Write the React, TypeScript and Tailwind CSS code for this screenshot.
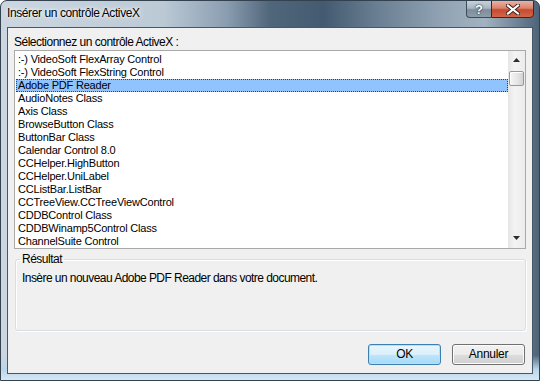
import React from "react";

const items = [
  ":-) VideoSoft FlexArray Control",
  ":-) VideoSoft FlexString Control",
  "Adobe PDF Reader",
  "AudioNotes Class",
  "Axis Class",
  "BrowseButton Class",
  "ButtonBar Class",
  "Calendar Control 8.0",
  "CCHelper.HighButton",
  "CCHelper.UniLabel",
  "CCListBar.ListBar",
  "CCTreeView.CCTreeViewControl",
  "CDDBControl Class",
  "CDDBWinamp5Control Class",
  "ChannelSuite Control",
];

const uiFont = { fontFamily: '"Liberation Sans", Arial, sans-serif' };

function TitleButtons() {
  return (
    <div className="ml-auto -mt-px flex self-start">
      <div className="flex h-[18px] w-[25px] items-center justify-center rounded-bl-[4px] border border-r-0 border-[#3d4a57] bg-[linear-gradient(to_bottom,#c6d1da_0%,#a9b6c2_45%,#7d8d9c_55%,#8d9dab_100%)]">
        <span className="text-[13px] font-bold leading-none text-white [text-shadow:0_0_2px_#1f2a35,0_0_1px_#1f2a35]">?</span>
      </div>
      <div className="flex h-[18px] w-[43px] items-center justify-center rounded-br-[4px] border border-[#4a2218] bg-[linear-gradient(to_bottom,#e9b3a4_0%,#d9826c_45%,#c64a30_55%,#d2664a_100%)]">
        <svg width="14" height="11" viewBox="0 0 14 11">
          <path d="M2 1.5 L12 9.5 M12 1.5 L2 9.5" stroke="#3b1a12" strokeWidth="4" strokeLinecap="square" />
          <path d="M2 1.5 L12 9.5 M12 1.5 L2 9.5" stroke="#ffffff" strokeWidth="2.2" strokeLinecap="square" />
        </svg>
      </div>
    </div>
  );
}

function ScrollBar() {
  return (
    <div className="flex w-[17px] flex-col bg-[linear-gradient(to_right,#e6e6e6,#f3f3f3_40%,#ececec)]">
      <div className="flex h-[17px] items-center justify-center pt-[1px]">
        <svg width="7" height="4" viewBox="0 0 7 4">
          <path d="M3.5 0 L7 4 L0 4 Z" fill="#2c2c2c" />
        </svg>
      </div>
      <div className="mx-[1px] mt-[3px] h-[15px] rounded-[2px] border border-[#989898] bg-[linear-gradient(to_right,#f6f6f6,#e4e4e4_60%,#d3d3d3)] shadow-[inset_1px_1px_0_#ffffff]" />
      <div className="mt-auto flex h-[17px] items-center justify-center pb-[3px]">
        <svg width="7" height="4" viewBox="0 0 7 4">
          <path d="M0 0 L7 0 L3.5 4 Z" fill="#2c2c2c" />
        </svg>
      </div>
    </div>
  );
}

function Button({ label, primary }: { label: string; primary?: boolean }) {
  return (
    <button
      className={
        primary
          ? "h-[21px] w-[73px] rounded-[3px] border border-[#3c7fb1] bg-[linear-gradient(to_bottom,#eaf6fd_0%,#d9f0fc_50%,#bee6fd_51%,#a7d9f5_100%)] text-[12px] leading-[19px] tracking-[-0.3px] text-black shadow-[inset_0_0_0_1px_#b6e1f8]"
          : "h-[21px] w-[73px] rounded-[3px] border border-[#707070] bg-[linear-gradient(to_bottom,#f2f2f2_0%,#ebebeb_50%,#dddddd_51%,#cfcfcf_100%)] text-[12px] leading-[19px] tracking-[-0.3px] text-black shadow-[inset_0_0_0_1px_#fcfcfc]"
      }
      style={uiFont}
    >
      {label}
    </button>
  );
}

export default function App() {
  return (
    <div
      className="flex h-[381px] w-[540px] flex-col overflow-hidden rounded-t-[7px] border border-[#34414e] bg-[linear-gradient(to_right,#cbd6e0_0%,#bccad6_30%,#8a9db0_42%,#50667b_50%,#435a70_60%,#6a7f93_70%,#91a3b3_82%,#a2b2c0_90%,#4d6378_100%)]"
      style={uiFont}
    >
      {/* Title bar */}
      <div className="flex h-[26px] pl-[6px] pr-[5px]">
        <span className="pt-[4px] text-[12px] leading-[16px] tracking-[-0.4px] text-black [text-shadow:0_0_6px_#ffffff,0_0_3px_#ffffff]">
          Insérer un contrôle ActiveX
        </span>
        <TitleButtons />
      </div>

      {/* Client area */}
      <div className="flex flex-1 flex-col px-[6px] pb-[6px] bg-[linear-gradient(to_bottom,transparent_0%,transparent_93%,#b9d5ea_97%,#d6e8f5_100%)]">
        <div className="flex flex-1 flex-col border border-[#485766] bg-[#f0f0f0]">
          <div className="pl-[6px] pt-[7px] text-[12px] leading-[15px] tracking-[-0.5px] text-black">
            Sélectionnez un contrôle ActiveX :
          </div>

          {/* List box */}
          <div className="mx-[6px] flex h-[199px] border border-[#a9a9a9] bg-white">
            <div className="flex flex-1 flex-col pt-[2px]">
              {items.map((it) => (
                <div
                  key={it}
                  className={
                    it === "Adobe PDF Reader"
                      ? "ml-[1px] h-[13px] border border-dotted border-[#5a3a1a] bg-[#8fc4ff] pl-[1px] text-[11px] leading-[11px] tracking-[-0.2px] text-black"
                      : "ml-[1px] h-[13px] pl-[2px] text-[11px] leading-[13px] tracking-[-0.2px] text-black"
                  }
                >
                  {it}
                </div>
              ))}
            </div>
            <ScrollBar />
          </div>

          {/* Group box */}
          <fieldset className="ml-[7px] mr-[6px] mt-[3px] h-[79px] rounded-[3px] border border-[#d5dfe5] px-[6px] pt-[4px] shadow-[inset_1px_1px_0_#ffffff,1px_1px_0_#ffffff]">
            <legend className="-ml-[2px] px-[2px] text-[12px] leading-[15px] tracking-[-0.5px] text-black">Résultat</legend>
            <div className="text-[12px] leading-[15px] tracking-[-0.55px] text-black">
              Insère un nouveau Adobe PDF Reader dans votre document.
            </div>
          </fieldset>

          {/* Buttons */}
          <div className="mt-[13px] flex justify-end gap-[11px] pr-[7px]">
            <Button label="OK" primary />
            <Button label="Annuler" />
          </div>
        </div>
      </div>
    </div>
  );
}
